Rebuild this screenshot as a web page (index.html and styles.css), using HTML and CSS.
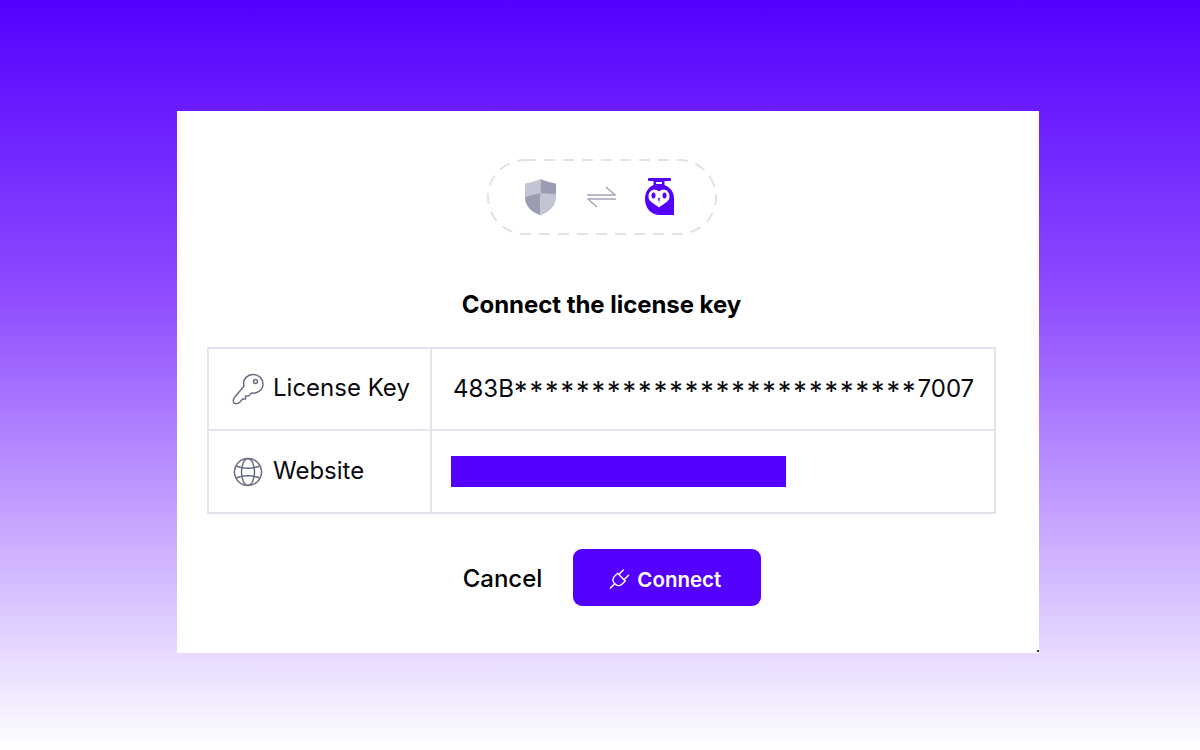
FILE: index.html
```html
<!DOCTYPE html>
<html lang="en">

<head>
    <meta charset="UTF-8">
    <title>Connect the license key</title>
    <link rel="stylesheet" href="styles.css">
</head>

<body>
    <div class="card">
        <div class="pill">
            <svg class="pillBorder" width="230" height="76" viewBox="0 0 230 76" fill="none">
                <rect x="1" y="1" width="228" height="74" rx="37" stroke="#dfe1ec" stroke-width="2" stroke-dasharray="11 8"/>
            </svg>
            <svg width="34" height="37" viewBox="0 0 34 37">
                <path d="M16.500 0 C12 2 6 4 1 4.500 V18 H16.500 Z" fill="#c3c5d2"/>
                <path d="M16.500 0 C21 2 27 4 32 4.500 V15 L16.500 18 Z" fill="#9a9cb2"/>
                <path d="M1 18 L16.500 14 V36.500 C8 33 1 28 1 18 Z" fill="#9a9cb2"/>
                <path d="M32 15 C33 27 25 33 16.500 36.500 V14 Z" fill="#c3c5d2"/>
            </svg>
            <svg width="29" height="22" viewBox="0 0 29 22" fill="none" stroke="#a2a4b6" stroke-width="1.400">
                <path d="M0 9 H28 L19 1"/>
                <path d="M29 13 H1 L10 21"/>
            </svg>
            <svg width="29" height="38" viewBox="0 0 29 38">
                <rect x="3" y="0" width="23" height="3" rx="1" fill="#5500ff"/>
                <path d="M8.500 3 H19.500 V7 C25 9 29 14 29 20 V37 H15 C6 37 0 30 0 21 C0 14 3.500 9 8.500 7 Z" fill="#5500ff"/>
                <rect x="11" y="4" width="6" height="2" fill="#fff"/>
                <path d="M14 13.500 C17 10.500 24 11 24.500 18 C25 24 19 25 14 29.500 C9 25 3 24 3.500 18 C4 11 11 10.500 14 13.500 Z" fill="#fff"/>
                <ellipse cx="8.500" cy="17.500" rx="2" ry="3" fill="#5500ff"/>
                <ellipse cx="19.500" cy="17.500" rx="2" ry="3" fill="#5500ff"/>
                <path d="M13 20 H15 L14 25 Z" fill="#5500ff"/>
            </svg>
        </div>

        <h2 class="title">Connect the license key</h2>

        <div class="infoTable">
            <div class="labelCell">
                <svg width="32" height="32" viewBox="0 0 32 32" fill="none" stroke="#6b6e80" stroke-width="1.500" stroke-linejoin="round">
                    <path d="M12 13 C10 6 16 1.500 21 1.500 C27 1.500 31 6 31 11 C31 17 25 21 19.500 20 L16.500 23 H13.500 V26 H10.500 L8 29 C6 31 3 31 2 30 C1 29 1 26 2.500 24.500 Z"/>
                    <circle cx="23.500" cy="8.500" r="2"/>
                </svg>
                <span>License Key</span>
            </div>
            <div class="valueCell keyValue">483B<span class="stars">**************************</span>7007</div>
            <div class="labelCell">
                <svg class="globeIcon" width="30" height="30" viewBox="0 0 30 30" fill="none" stroke="#6b6e80" stroke-width="1.500">
                    <circle cx="15" cy="15" r="13.500"/>
                    <ellipse cx="15" cy="15" rx="6.500" ry="13.500"/>
                    <path d="M3 9 C10 12 20 12 27 9"/>
                    <path d="M3 21 C10 18 20 18 27 21"/>
                </svg>
                <span>Website</span>
            </div>
            <div class="valueCell">
                <div class="redacted"></div>
            </div>
        </div>

        <div class="actions">
            <span class="cancel">Cancel</span>
            <button class="connect" type="button">
                <svg width="21" height="22" viewBox="0 0 22 22" fill="none" stroke="#fff" stroke-width="1.500" stroke-linecap="round">
                    <path d="M1.500 20.500 L6 16"/>
                    <path d="M9 5 L17 13 L13.500 16.500 C11 18.500 8 18 6 16 C4 14 3.500 11 5.500 8.500 Z"/>
                    <path d="M10.500 6 L15 1.500"/>
                    <path d="M16 11.500 L20.500 7"/>
                </svg>
                Connect
            </button>
        </div>
    </div>
</body>

</html>
```

FILE: styles.css
```css
html, body {
    margin: 0;
    height: 100%;
}

body {
    background: linear-gradient(#5500ff 0%, #8f4dff 40%, #ffffff 100%);
    font-family: Inter, "Liberation Sans", sans-serif;
    color: #0a0a0f;
    box-sizing: border-box;
    padding: 111px 161px 97px 177px;
    overflow: hidden;
}

.card {
    background-color: white;
    height: 542px;
    box-sizing: border-box;
    padding: 48px 43px 0 30px;
    display: flex;
    flex-direction: column;
    align-items: center;
    position: relative;
}

/* tiny dark speck on the card corner */
.card::after {
    content: "";
    position: absolute;
    right: 0;
    bottom: 1px;
    width: 2px;
    height: 2px;
    background-color: #333;
}

.pill {
    width: 230px;
    height: 76px;
    box-sizing: border-box;
    padding-right: 6px;
    display: flex;
    align-items: center;
    justify-content: center;
    gap: 29px;
    position: relative;
}

.pillBorder {
    position: absolute;
    left: 0;
    top: 0;
}

.title {
    margin: 55px 0 27px;
    font-size: 24px;
    line-height: 30px;
    font-weight: 700;
    letter-spacing: -0.05px;
    color: #000;
}

.infoTable {
    width: 100%;
    box-sizing: border-box;
    border: 2px solid #e3e5ee;
    display: grid;
    grid-template-columns: 223px 1fr;
    grid-template-rows: 82px 81px;
}

.labelCell, .valueCell {
    display: flex;
    align-items: center;
    font-size: 24px;
}

.labelCell {
    gap: 9px;
    padding-left: 23px;
    border-right: 2px solid #e3e5ee;
}

.labelCell span {
    margin-bottom: 3px;
}

.globeIcon {
    margin: 0 1px;
}

.valueCell {
    padding-left: 19px;
}

.infoTable > div:nth-child(-n+2) {
    border-bottom: 2px solid #e3e5ee;
}

.keyValue {
    display: block;
    padding-left: 21px;
    line-height: 80px;
    white-space: nowrap;
}

.stars {
    font-size: 27px;
    line-height: 20px;
    letter-spacing: 2px;
    vertical-align: -4px;
}

.redacted {
    background-color: #5500ff;
    width: 335px;
    height: 31px;
}

.actions {
    display: flex;
    align-items: center;
    gap: 31px;
    margin-top: 35px;
    margin-left: 21px;
}

.cancel {
    font-size: 24px;
    font-weight: 500;
    color: #000;
    padding-top: 2px;
}

.connect {
    background-color: #5500ff;
    color: white;
    border: none;
    border-radius: 9px;
    width: 188px;
    height: 57px;
    padding: 3px 4px 0 0;
    font-family: inherit;
    font-size: 20.500px;
    font-weight: 600;
    display: flex;
    align-items: center;
    justify-content: center;
    gap: 7px;
}
```
